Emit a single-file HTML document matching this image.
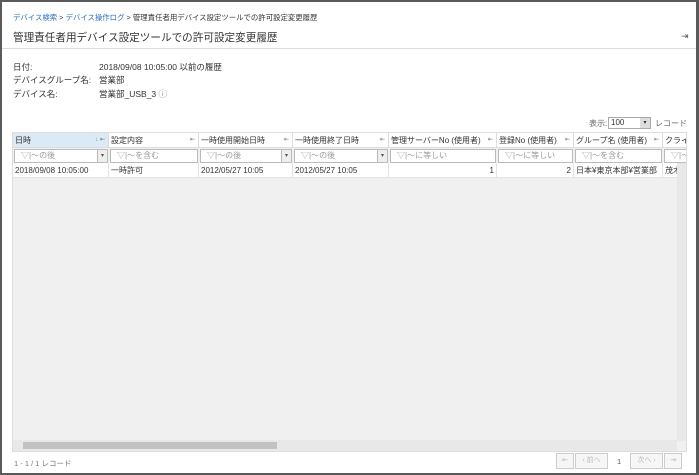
<!DOCTYPE html>
<html><head><meta charset="utf-8"><style>
*{box-sizing:border-box;margin:0;padding:0}
body{width:699px;height:475px;overflow:hidden;background:#fff;font-family:"Liberation Sans","Noto Sans CJK JP",sans-serif;color:#333;position:relative}
.frame{position:absolute;left:0;top:0;width:699px;height:475px;border:2px solid #5a5a5a;border-right-width:3px}
.a{position:absolute;white-space:nowrap}
.bc{font-size:7.4px;top:12px;left:13px;color:#333}
.bc span{color:#2a6ebb}
.title{font-size:10.6px;top:30px;left:13px;color:#333}
.hr{position:absolute;left:2px;right:3px;top:48px;height:1px;background:#ddd}
.lbl{font-size:8.5px;color:#333}
.grid{position:absolute;left:12px;top:132px;width:675px;height:320px;background:#f0f0f0;border:1px solid #ddd;overflow:hidden}
.col{position:absolute;top:0;height:45px}
.h{position:absolute;top:0;height:15px;font-size:8px;line-height:15px;padding-left:2px;background:#fff;border-right:1px solid #ddd;border-bottom:1px solid #ddd;width:100%}
.f{position:absolute;top:16px;height:14px;left:1px;right:1px;border:1px solid #bbb;background:#fff;font-size:8px;line-height:12px;color:#999;padding-left:6px}
.d{position:absolute;top:30px;height:15px;width:100%;background:#fff;font-size:8px;line-height:15px;padding:0 2px;border-right:1px solid #e4e4e4;border-bottom:1px solid #e4e4e4}
.pin{position:absolute;right:3px;top:0;font-size:6px;color:#777}
.dd{position:absolute;right:0;top:0;width:10px;height:12px;background:#eee;border-left:1px solid #bbb;font-size:6px;text-align:center;color:#555}
.btn{position:absolute;top:453px;height:16px;border:1px solid #ccc;background:#f6f6f6;font-size:7px;color:#bbb;line-height:14px;text-align:center}
</style></head><body>
<div class="frame"></div>
<div class="a bc"><span>デバイス検索</span> &gt; <span>デバイス操作ログ</span> &gt; 管理責任者用デバイス設定ツールでの許可設定変更履歴</div>
<div class="a title">管理責任者用デバイス設定ツールでの許可設定変更履歴</div>
<div class="a" style="left:681px;top:31px;font-size:9px;color:#555">⇥</div>
<div class="hr"></div>
<div class="a lbl" style="left:13px;top:61px">日付:</div>
<div class="a lbl" style="left:99px;top:61px">2018/09/08 10:05:00 以前の履歴</div>
<div class="a lbl" style="left:13px;top:74px">デバイスグループ名:</div>
<div class="a lbl" style="left:99px;top:74px">営業部</div>
<div class="a lbl" style="left:13px;top:88px">デバイス名:</div>
<div class="a lbl" style="left:99px;top:88px">営業部_USB_3 <span style="color:#888">ⓘ</span></div>
<div class="a" style="left:589px;top:118px;font-size:8px;color:#666">表示:</div>
<div class="a" style="left:608px;top:117px;width:43px;height:12px;border:1px solid #aaa;font-size:8px;line-height:10px;padding-left:2px;background:#fff">100<span style="position:absolute;right:0;top:0;width:10px;height:10px;background:#ddd;font-size:6px;text-align:center">▾</span></div>
<div class="a" style="left:655px;top:118px;font-size:8px;color:#666">レコード</div>
<div class="grid">
 <div class="col" style="left:0;width:96px"><div class="h" style="background:#dce9f7">日時<span class="pin">↓ ⇤</span></div><div class="f">▽|～の後<span class="dd">▾</span></div><div class="d">2018/09/08 10:05:00</div></div>
 <div class="col" style="left:96px;width:90px"><div class="h">設定内容<span class="pin">⇤</span></div><div class="f">▽|～を含む</div><div class="d">一時許可</div></div>
 <div class="col" style="left:186px;width:94px"><div class="h">一時使用開始日時<span class="pin">⇤</span></div><div class="f">▽|～の後<span class="dd">▾</span></div><div class="d">2012/05/27 10:05</div></div>
 <div class="col" style="left:280px;width:96px"><div class="h">一時使用終了日時<span class="pin">⇤</span></div><div class="f">▽|～の後<span class="dd">▾</span></div><div class="d">2012/05/27 10:05</div></div>
 <div class="col" style="left:376px;width:108px"><div class="h">管理サーバーNo (使用者)<span class="pin">⇤</span></div><div class="f">▽|～に等しい</div><div class="d" style="text-align:right">1</div></div>
 <div class="col" style="left:484px;width:77px"><div class="h">登録No (使用者)<span class="pin">⇤</span></div><div class="f">▽|～に等しい</div><div class="d" style="text-align:right">2</div></div>
 <div class="col" style="left:561px;width:89px"><div class="h">グループ名 (使用者)<span class="pin">⇤</span></div><div class="f">▽|～を含む</div><div class="d">日本¥東京本部¥営業部</div></div>
 <div class="col" style="left:650px;width:30px"><div class="h">クライ</div><div class="f">▽|～</div><div class="d">茂木</div></div>
 <div style="position:absolute;left:664px;top:30px;width:10px;height:278px;background:#e8e8e8"></div>
 <div style="position:absolute;left:0;top:307px;width:664px;height:11px;background:#e8e8e8"></div>
 <div style="position:absolute;left:10px;top:309px;width:254px;height:7px;background:#c2c2c2"></div>
</div>
<div class="a" style="left:14px;top:458px;font-size:7.5px;color:#777">1 - 1 / 1 レコード</div>
<div class="btn" style="left:556px;width:18px">⇤</div>
<div class="btn" style="left:575px;width:33px">‹ 前へ</div>
<div class="a" style="left:617px;top:457px;font-size:7.5px;color:#555">1</div>
<div class="btn" style="left:630px;width:33px">次へ ›</div>
<div class="btn" style="left:664px;width:18px">⇥</div>
</body></html>
